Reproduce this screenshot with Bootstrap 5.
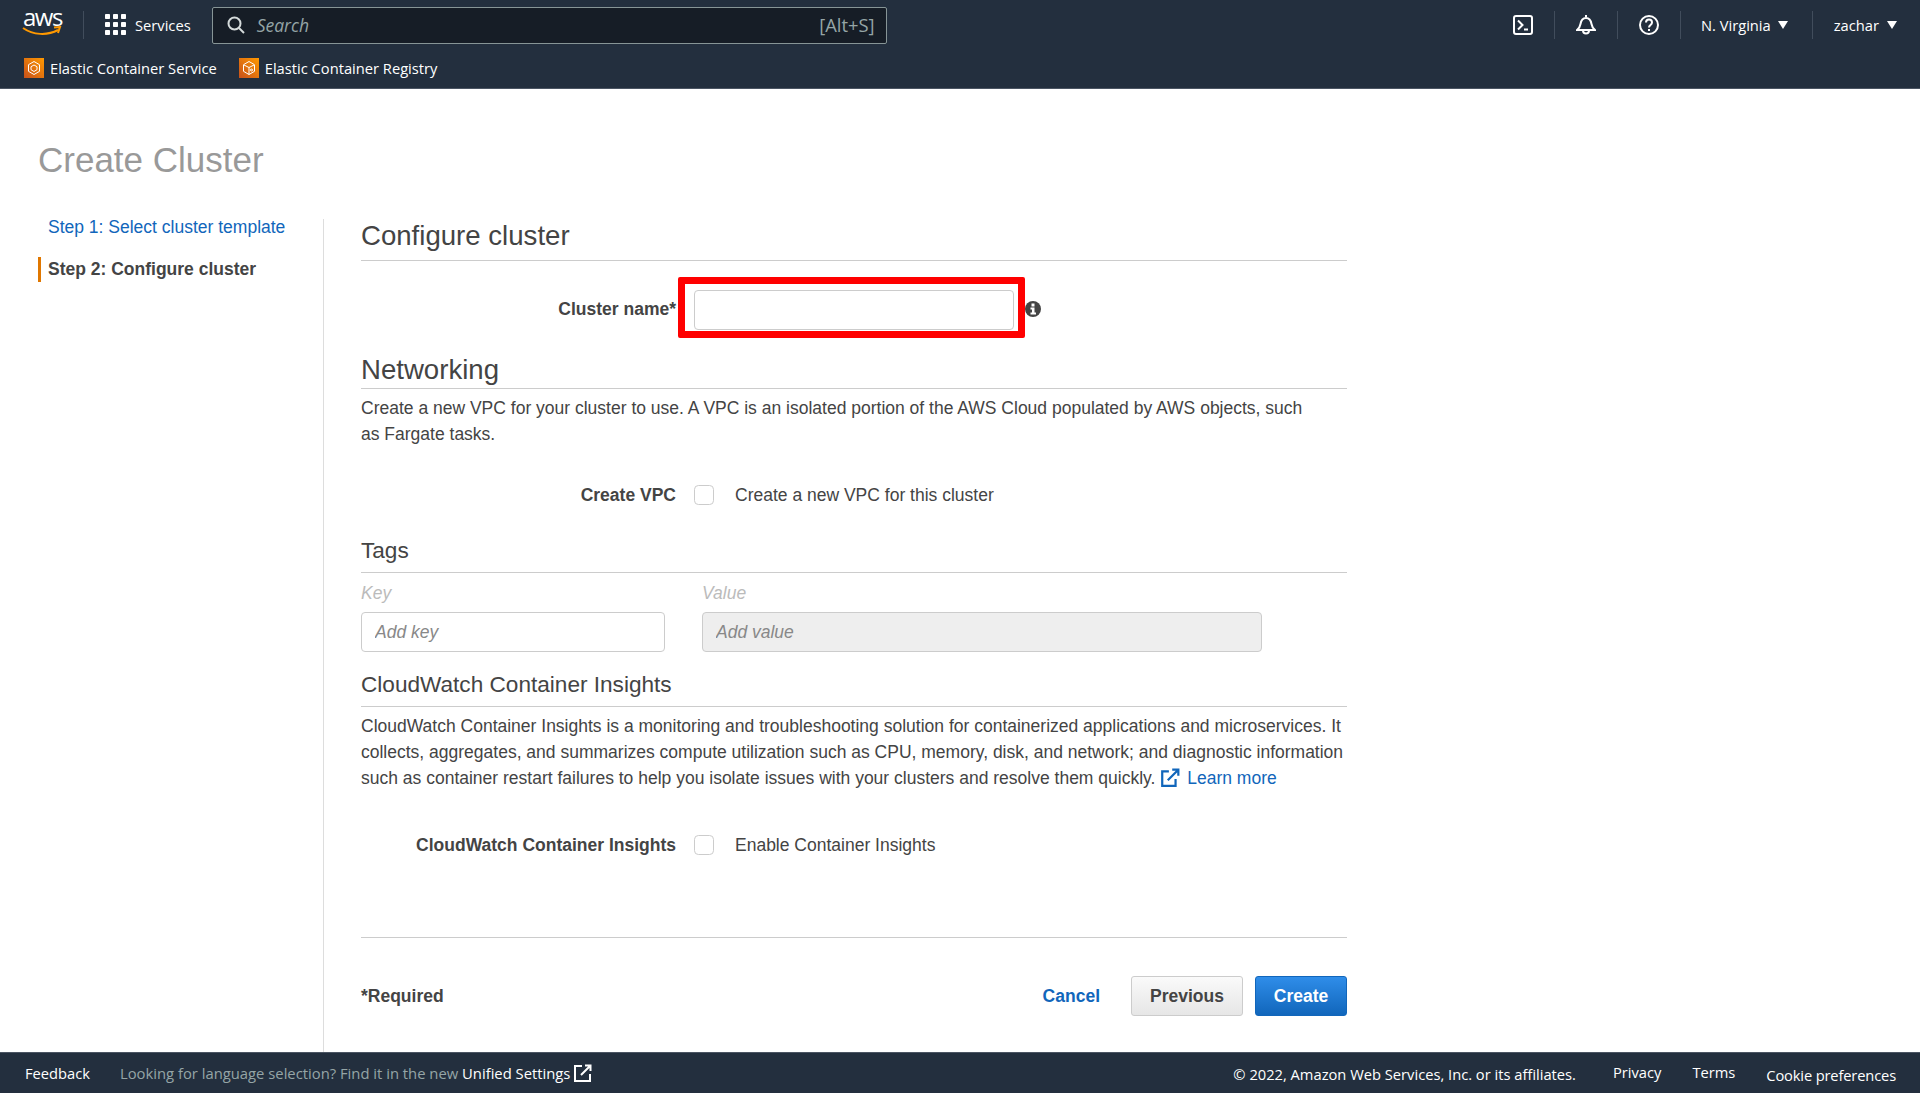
<!DOCTYPE html>
<html lang="en">
<head>
  <meta charset="UTF-8">
  <meta name="viewport" content="width=device-width, initial-scale=1.0">
  <title>Create Cluster</title>
  <link href="https://cdn.jsdelivr.net/npm/bootstrap@5.3.3/dist/css/bootstrap.min.css" rel="stylesheet">
  <style>
    html, body { height: 100%; }
    body {
      font-family: "Liberation Sans", Arial, sans-serif;
      font-size: 17.5px;
      color: #444;
      background: #fff;
    }
    .page-wrap { height: 100vh; overflow: hidden; }

    /* top console bar */
    .aws-head { background: #232f3e; color: #fff; height: 89px; font-family: "Open Sans", sans-serif; font-size: 14.7px; border-bottom: 1px solid #4b5563; flex: none; }
    .head-top { height: 50px; padding-left: 22px; }
    .aws-logo { width: 40px; height: 32px; position: relative; font-size: 24px; line-height: 20px; letter-spacing: -1.500px; margin-top: -4px; padding-left: 1px; }
    .aws-logo svg { position: absolute; left: 0; top: 19px; }
    .head-sep { width: 1px; height: 28px; background: #414d5c; }
    .logo-sep { margin-left: 21px; }
    .svc-btn { margin-left: 21px; gap: 9px; }
    .search-box { width: 675px; height: 37px; margin-left: 21px; background: #161d26; border: 1px solid #879596; border-radius: 2px; padding: 0 11px 0 14px; color: #95a5a6; }
    .search-box em { font-size: 17.5px; margin-left: 12px; }
    .search-box span { font-size: 18.4px; }
    .head-right { margin-left: auto; }
    .head-ico { width: 62px; line-height: 1; }
    .head-drop { gap: 8px; }
    .drop-region { margin: 0 24px 0 20px; gap: 7px; }
    .drop-user { margin: 0 23px 0 21px; }
    .tri { width: 0; height: 0; border-left: 5px solid transparent; border-right: 5px solid transparent; border-top: 8px solid #fff; }
    .head-fav { height: 36px; padding-left: 24px; gap: 22px; }
    .fav-item { gap: 6px; }
    .fav-ico { width: 20px; height: 20px; background: linear-gradient(45deg, #c8511b, #ff9900); display: block; }

    /* main */
    .main-area { flex: 1 1 auto; min-height: 0; }
    .page-title { color: #999; font-size: 35px; font-weight: 400; line-height: 40px; margin: 51px 0 0 38px; }
    .body-cols { margin: 39px 0 0 38px; height: 834px; }
    .side-steps { width: 286px; border-right: 1px solid #ddd; flex: none; }
    .step-link { display: block; color: #1166bb; text-decoration: none; padding-left: 10px; line-height: 22px; margin-top: -3px; }
    .step-cur { display: block; font-weight: 700; color: #444; border-left: 3px solid #e07700; padding-left: 7px; line-height: 25px; margin-top: 19px; }
    .form-area { width: 986px; margin-left: 37px; }
    .sect-head { font-size: 27.6px; font-weight: 400; color: #444; margin: 0; border-bottom: 1px solid #ccc; }
    .sect-sm { font-size: 22.6px; }
    .sect-txt { line-height: 26px; margin: 0; }
    .sect-txt a { color: #1166bb; text-decoration: none; }
    .sect-wide { margin-right: -10px; }
    .form-line { height: 40px; }
    .form-lbl { width: 315px; text-align: right; font-weight: 700; margin: 0; flex: none; }
    .lbl-up { padding-bottom: 2px; }
    .name-field { margin-left: 18px; width: 320px; position: relative; }
    .aws-input { border: 1px solid #ccc; border-radius: 4px; height: 40px; font-size: 17.5px; padding: 0 13px; box-shadow: none; }
    .aws-input::placeholder { color: #888; font-style: italic; }
    .red-box { position: absolute; left: -16px; top: -13px; width: 347px; height: 61px; border: 7px solid #f00; border-radius: 2px; pointer-events: none; }
    .info-ico { margin: 0 0 2px 11px; }
    .aws-check { width: 20px; height: 20px; margin: 0 0 0 18px; border: 1px solid #ccc; border-radius: 5px; }
    .check-txt { margin-left: 21px; }
    .tag-lbl { color: #bbb; font-style: italic; font-size: 17.5px; line-height: 20px; }
    .tag-key { width: 304px; }
    .tag-val { width: 560px; margin-left: 37px; }
    .tag-val .aws-input { background: #eee; }
    .form-rule { border-top: 1px solid #ccc; opacity: 1; margin: 0; }
    .req-txt { font-weight: 700; }
    .cancel-link { color: #1166bb; font-weight: 700; text-decoration: none; margin-right: 31px; }
    .btn-prev, .btn-create { height: 40px; font-size: 17.5px; font-weight: 700; border-radius: 3px; padding: 0; }
    .btn-prev { width: 112px; margin-right: 12px; color: #444; border: 1px solid #ccc; background: linear-gradient(#fafafa, #e6e6e6); }
    .btn-create { width: 92px; color: #fff; border: 1px solid #1166bb; background: linear-gradient(#2f8de9, #1166bb); }

    /* bottom bar */
    .aws-foot { background: #232f3e; height: 41px; color: #fff; border-top: 1px solid #4b5563; flex: none; font-family: "Open Sans", sans-serif; font-size: 14.7px; padding: 0 24px 0 25px; }
    .foot-note { color: #95a5a6; margin-left: 30px; font-size: 14.8px; }
    .foot-note b { color: #fff; font-weight: 400; }
    .foot-right { margin-left: auto; gap: 31px; padding-top: 2px; }
    .foot-copy { margin: 2px 6px 0 0; }
    .foot-cookie { margin-top: 3px; letter-spacing: -.15px; }
  </style>
</head>
<body>
<div class="page-wrap d-flex flex-column">

  <header class="aws-head">
    <div class="head-top d-flex align-items-center">
      <div class="aws-logo">aws
        <svg width="40" height="12" viewBox="0 0 40 12"><path d="M1 2c10 7 24 8 35 2" fill="none" stroke="#f90" stroke-width="2"/><path d="M32 1.500l6-.5-2 6" fill="none" stroke="#f90" stroke-width="2"/></svg>
      </div>
      <div class="head-sep logo-sep"></div>
      <div class="svc-btn d-flex align-items-center">
        <svg width="21" height="21" viewBox="0 0 21 21" fill="#fff"><rect width="5" height="5" rx=".8"/><rect x="8" width="5" height="5" rx=".8"/><rect x="16" width="5" height="5" rx=".8"/><rect y="8" width="5" height="5" rx=".8"/><rect x="8" y="8" width="5" height="5" rx=".8"/><rect x="16" y="8" width="5" height="5" rx=".8"/><rect y="16" width="5" height="5" rx=".8"/><rect x="8" y="16" width="5" height="5" rx=".8"/><rect x="16" y="16" width="5" height="5" rx=".8"/></svg>
        <span>Services</span>
      </div>
      <div class="search-box d-flex align-items-center">
        <svg width="18" height="18" viewBox="0 0 18 18" fill="none" stroke="#d5dbdb" stroke-width="2"><circle cx="7.500" cy="7.500" r="6"/><path d="M12 12l5 5"/></svg>
        <em>Search</em>
        <span class="ms-auto">[Alt+S]</span>
      </div>
      <div class="head-right d-flex align-items-center">
        <div class="head-ico text-center">
          <svg width="20" height="20" viewBox="0 0 20 20" fill="none" stroke="#fff" stroke-width="2"><rect x="1" y="1" width="18" height="18" rx="2"/><path d="M5 5.500l4.500 4.500-4.500 4.500M11 14.500h4"/></svg>
        </div>
        <div class="head-sep"></div>
        <div class="head-ico text-center">
          <svg width="20" height="20" viewBox="0 0 20 20" fill="none" stroke="#fff" stroke-width="2"><path d="M10 0v2"/><path d="M1 15h18c-2-1.500-3-3-3.500-6-.5-3-2-6-5.500-6S5 6 4.500 9C4 12 3 13.500 1 15z"/><path d="M7 15.500a3 3 0 0 0 6 0"/></svg>
        </div>
        <div class="head-sep"></div>
        <div class="head-ico text-center">
          <svg width="20" height="20" viewBox="0 0 20 20" fill="none" stroke="#fff" stroke-width="2"><circle cx="10" cy="10" r="9"/><path d="M7 7.500c0-4 6-4 6 0 0 2.500-3 2.500-3 5"/><path d="M10 14v2"/></svg>
        </div>
        <div class="head-sep"></div>
        <div class="head-drop drop-region d-flex align-items-center">N. Virginia <i class="tri"></i></div>
        <div class="head-sep"></div>
        <div class="head-drop drop-user d-flex align-items-center">zachar <i class="tri"></i></div>
      </div>
    </div>
    <div class="head-fav d-flex align-items-center">
      <div class="fav-item d-flex align-items-center">
        <svg class="fav-ico" viewBox="0 0 20 20" fill="none" stroke="#fff" stroke-width="1"><path d="M10 3.500l5.500 3.200v6.600L10 16.500l-5.500-3.200V6.700z"/><path d="M10 7l3 1.700v3L10 13.500 7 11.700v-3z"/></svg>
        <span>Elastic Container Service</span>
      </div>
      <div class="fav-item d-flex align-items-center">
        <svg class="fav-ico" viewBox="0 0 20 20" fill="none" stroke="#fff" stroke-width="1"><path d="M10 3.500l5.500 3.200v6.600L10 16.500l-5.500-3.200V6.700z"/><path d="M10 9.500v7M5 7l5 2.500L15 7"/><circle cx="12.500" cy="12" r="1"/></svg>
        <span>Elastic Container Registry</span>
      </div>
    </div>
  </header>

  <main class="main-area">
    <h1 class="page-title">Create Cluster</h1>
    <div class="body-cols d-flex">
      <nav class="side-steps">
        <a class="step-link" href="#">Step 1: Select cluster template</a>
        <span class="step-cur">Step 2: Configure cluster</span>
      </nav>
      <form class="form-area">
        <h2 class="sect-head" style="line-height: 34px; padding-bottom: 7px">Configure cluster</h2>

        <div class="form-line d-flex align-items-center" style="margin-top: 29px">
          <label class="form-lbl lbl-up">Cluster name*</label>
          <div class="name-field">
            <input class="form-control aws-input" type="text">
            <div class="red-box"></div>
          </div>
          <svg class="info-ico" width="16" height="16" viewBox="0 0 16 16"><circle cx="8" cy="8" r="8" fill="#444"/><rect x="6.500" y="2.500" width="3" height="3" fill="#fff"/><path d="M5.500 6.500h4v5h1.500v2H5.500v-2H7v-3H5.500z" fill="#fff"/></svg>
        </div>

        <h2 class="sect-head" style="line-height: 30px; margin-top: 25px; padding-bottom: 3px">Networking</h2>
        <p class="sect-txt" style="margin-top: 6px; width: 950px">Create a new VPC for your cluster to use. A VPC is an isolated portion of the AWS Cloud populated by AWS objects, such as Fargate tasks.</p>

        <div class="form-line d-flex align-items-center" style="margin-top: 28px">
          <label class="form-lbl">Create VPC</label>
          <input class="form-check-input aws-check" type="checkbox">
          <span class="check-txt">Create a new VPC for this cluster</span>
        </div>

        <h2 class="sect-head sect-sm" style="line-height: 30px; margin-top: 21px; padding-bottom: 6px">Tags</h2>
        <div class="d-flex" style="margin-top: 10px">
          <div class="tag-key">
            <div class="tag-lbl">Key</div>
            <input class="form-control aws-input" style="margin-top: 9px" type="text" placeholder="Add key">
          </div>
          <div class="tag-val">
            <div class="tag-lbl">Value</div>
            <input class="form-control aws-input" style="margin-top: 9px" type="text" placeholder="Add value" disabled>
          </div>
        </div>

        <h2 class="sect-head sect-sm" style="line-height: 30px; margin-top: 18px; padding-bottom: 6px">CloudWatch Container Insights</h2>
        <p class="sect-txt sect-wide" style="margin-top: 6px">CloudWatch Container Insights is a monitoring and troubleshooting solution for containerized applications and microservices. It collects, aggregates, and summarizes compute utilization such as CPU, memory, disk, and network; and diagnostic information such as container restart failures to help you isolate issues with your clusters and resolve them quickly. <a href="#"><svg width="20" height="20" viewBox="0 0 18 18" fill="none" stroke="#1166bb" stroke-width="2" style="vertical-align: -4px; margin-right: 7px"><path d="M8 3H2v13h12v-6"/><path d="M7 11l9-9M11 1.500h5.500V7"/></svg>Learn more</a></p>

        <div class="form-line d-flex align-items-center" style="margin-top: 34px">
          <label class="form-lbl">CloudWatch Container Insights</label>
          <input class="form-check-input aws-check" type="checkbox">
          <span class="check-txt">Enable Container Insights</span>
        </div>

        <hr class="form-rule" style="margin-top: 72px">

        <div class="d-flex align-items-center" style="margin-top: 38px">
          <span class="req-txt">*Required</span>
          <a class="cancel-link ms-auto" href="#">Cancel</a>
          <button class="btn btn-prev" type="button">Previous</button>
          <button class="btn btn-create" type="button">Create</button>
        </div>
      </form>
    </div>
  </main>

  <footer class="aws-foot d-flex align-items-center">
    <span>Feedback</span>
    <span class="foot-note">Looking for language selection? Find it in the new <b>Unified Settings</b>
      <svg width="18" height="18" viewBox="0 0 18 18" fill="none" stroke="#fff" stroke-width="2" style="vertical-align: -3px"><path d="M8 2H1v15h15v-7"/><path d="M7 11l9-9M11 1.500h5.500V7"/></svg>
    </span>
    <div class="foot-right d-flex">
      <span class="foot-copy">© 2022, Amazon Web Services, Inc. or its affiliates.</span>
      <span>Privacy</span>
      <span>Terms</span>
      <span class="foot-cookie">Cookie preferences</span>
    </div>
  </footer>

</div>
<script src="https://cdn.jsdelivr.net/npm/bootstrap@5.3.3/dist/js/bootstrap.bundle.min.js"></script>
</body>
</html>
